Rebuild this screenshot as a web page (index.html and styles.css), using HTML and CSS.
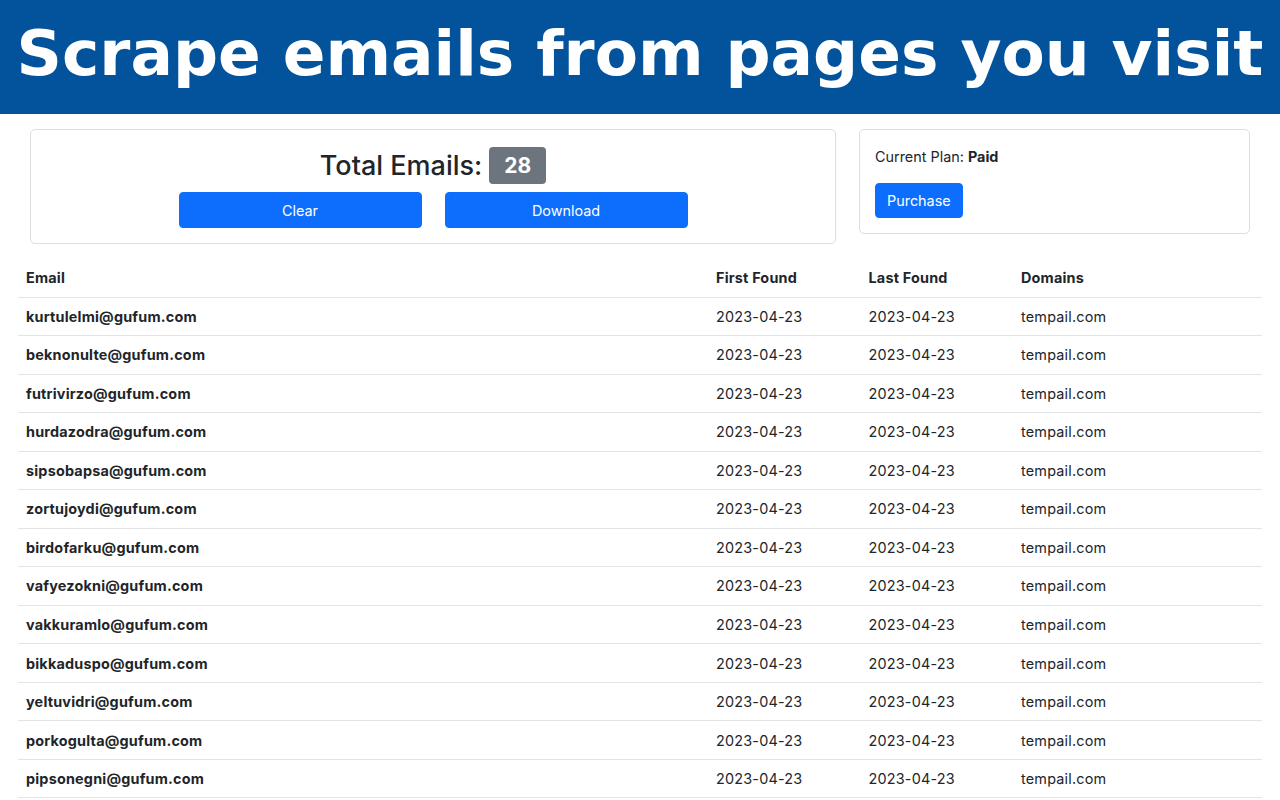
FILE: index.html
```html
<!DOCTYPE html>
<html>
<head>
<meta charset="utf-8">
<link rel="stylesheet" href="styles.css">
</head>
<body>
<header class="banner"><h1>Scrape emails from pages you visit</h1></header>
<main class="page">
  <section class="cards">
    <div class="card card-total">
      <h3 class="total">Total Emails: <span class="badge">28</span></h3>
      <div class="actions">
        <button class="btn btn-wide">Clear</button>
        <button class="btn btn-wide">Download</button>
      </div>
    </div>
    <div class="card card-plan">
      <p class="plan">Current Plan: <strong>Paid</strong></p>
      <button class="btn">Purchase</button>
    </div>
  </section>
  <table class="emails">
    <colgroup>
      <col class="c-email"><col class="c-date"><col class="c-date"><col>
    </colgroup>
    <thead>
      <tr><th>Email</th><th>First Found</th><th>Last Found</th><th>Domains</th></tr>
    </thead>
    <tbody>
      <tr><th>kurtulelmi@gufum.com</th><td>2023-04-23</td><td>2023-04-23</td><td>tempail.com</td></tr>
      <tr><th>beknonulte@gufum.com</th><td>2023-04-23</td><td>2023-04-23</td><td>tempail.com</td></tr>
      <tr><th>futrivirzo@gufum.com</th><td>2023-04-23</td><td>2023-04-23</td><td>tempail.com</td></tr>
      <tr><th>hurdazodra@gufum.com</th><td>2023-04-23</td><td>2023-04-23</td><td>tempail.com</td></tr>
      <tr><th>sipsobapsa@gufum.com</th><td>2023-04-23</td><td>2023-04-23</td><td>tempail.com</td></tr>
      <tr><th>zortujoydi@gufum.com</th><td>2023-04-23</td><td>2023-04-23</td><td>tempail.com</td></tr>
      <tr><th>birdofarku@gufum.com</th><td>2023-04-23</td><td>2023-04-23</td><td>tempail.com</td></tr>
      <tr><th>vafyezokni@gufum.com</th><td>2023-04-23</td><td>2023-04-23</td><td>tempail.com</td></tr>
      <tr><th>vakkuramlo@gufum.com</th><td>2023-04-23</td><td>2023-04-23</td><td>tempail.com</td></tr>
      <tr><th>bikkaduspo@gufum.com</th><td>2023-04-23</td><td>2023-04-23</td><td>tempail.com</td></tr>
      <tr><th>yeltuvidri@gufum.com</th><td>2023-04-23</td><td>2023-04-23</td><td>tempail.com</td></tr>
      <tr><th>porkogulta@gufum.com</th><td>2023-04-23</td><td>2023-04-23</td><td>tempail.com</td></tr>
      <tr><th>pipsonegni@gufum.com</th><td>2023-04-23</td><td>2023-04-23</td><td>tempail.com</td></tr>
    </tbody>
  </table>
</main>
</body>
</html>
```

FILE: styles.css
```css
* { box-sizing: border-box; }
html, body { margin: 0; padding: 0; }
body {
  font-family: Inter, "Noto Sans", sans-serif;
  font-size: 14.4px;
  line-height: 1.5;
  color: #212529;
  background: #fff;
  overflow: hidden;
}
.banner {
  background: #02529c;
  height: 114px;
  display: flex;
  align-items: center;
  justify-content: center;
}
.banner h1 {
  margin: 0;
  color: #fff;
  font-family: "DejaVu Sans", sans-serif;
  font-weight: bold;
  font-size: 63px;
  line-height: 1;
  white-space: nowrap;
  padding-bottom: 8px;
}
.page { padding: 15px 18px 0; }
.cards {
  display: grid;
  grid-template-columns: 806px 391px;
  column-gap: 23px;
  padding: 0 12px;
  align-items: start;
}
.card {
  border: 1px solid #dcdee0;
  border-radius: 5px;
  background: #fff;
}
.card-total {
  padding: 17px 15px 15px;
  text-align: center;
}
.total {
  margin: 0 0 8px;
  font-size: 27px;
  font-weight: 500;
  line-height: 37px;
  display: flex;
  justify-content: center;
  align-items: center;
  gap: 7px;
}
.badge {
  display: inline-block;
  background: #6c757d;
  color: #fff;
  font-size: 21px;
  font-weight: 700;
  line-height: 37px;
  height: 37px;
  padding: 0 15px;
  border-radius: 4px;
}
.actions {
  display: flex;
  justify-content: center;
  gap: 23px;
}
.btn {
  font-family: inherit;
  font-size: 14.4px;
  line-height: 21px;
  color: #fff;
  background: #0d6efd;
  border: 1px solid #0d6efd;
  border-radius: 4px;
  padding: 6px 11px;
  cursor: pointer;
}
.btn-wide { width: 243px; height: 36px; }
.card-plan { padding: 15px 15px 15px; }
.plan { margin: 0 0 15px; line-height: 23px; }
.plan strong { font-weight: 700; }
.card-plan .btn { height: 35px; padding: 0 11px; }
.emails {
  width: 100%;
  border-collapse: collapse;
  margin-top: 15px;
  letter-spacing: 0.2px;
}
.c-email { width: 690px; }
.c-date { width: 152.5px; }
.emails th, .emails td {
  text-align: left;
  padding: 7.2px 8px;
  line-height: 23.15px;
  border-bottom: 1px solid #e2e4e6;
  vertical-align: top;
}
.emails th { font-weight: 700; }
.emails td { font-weight: 400; }
```
